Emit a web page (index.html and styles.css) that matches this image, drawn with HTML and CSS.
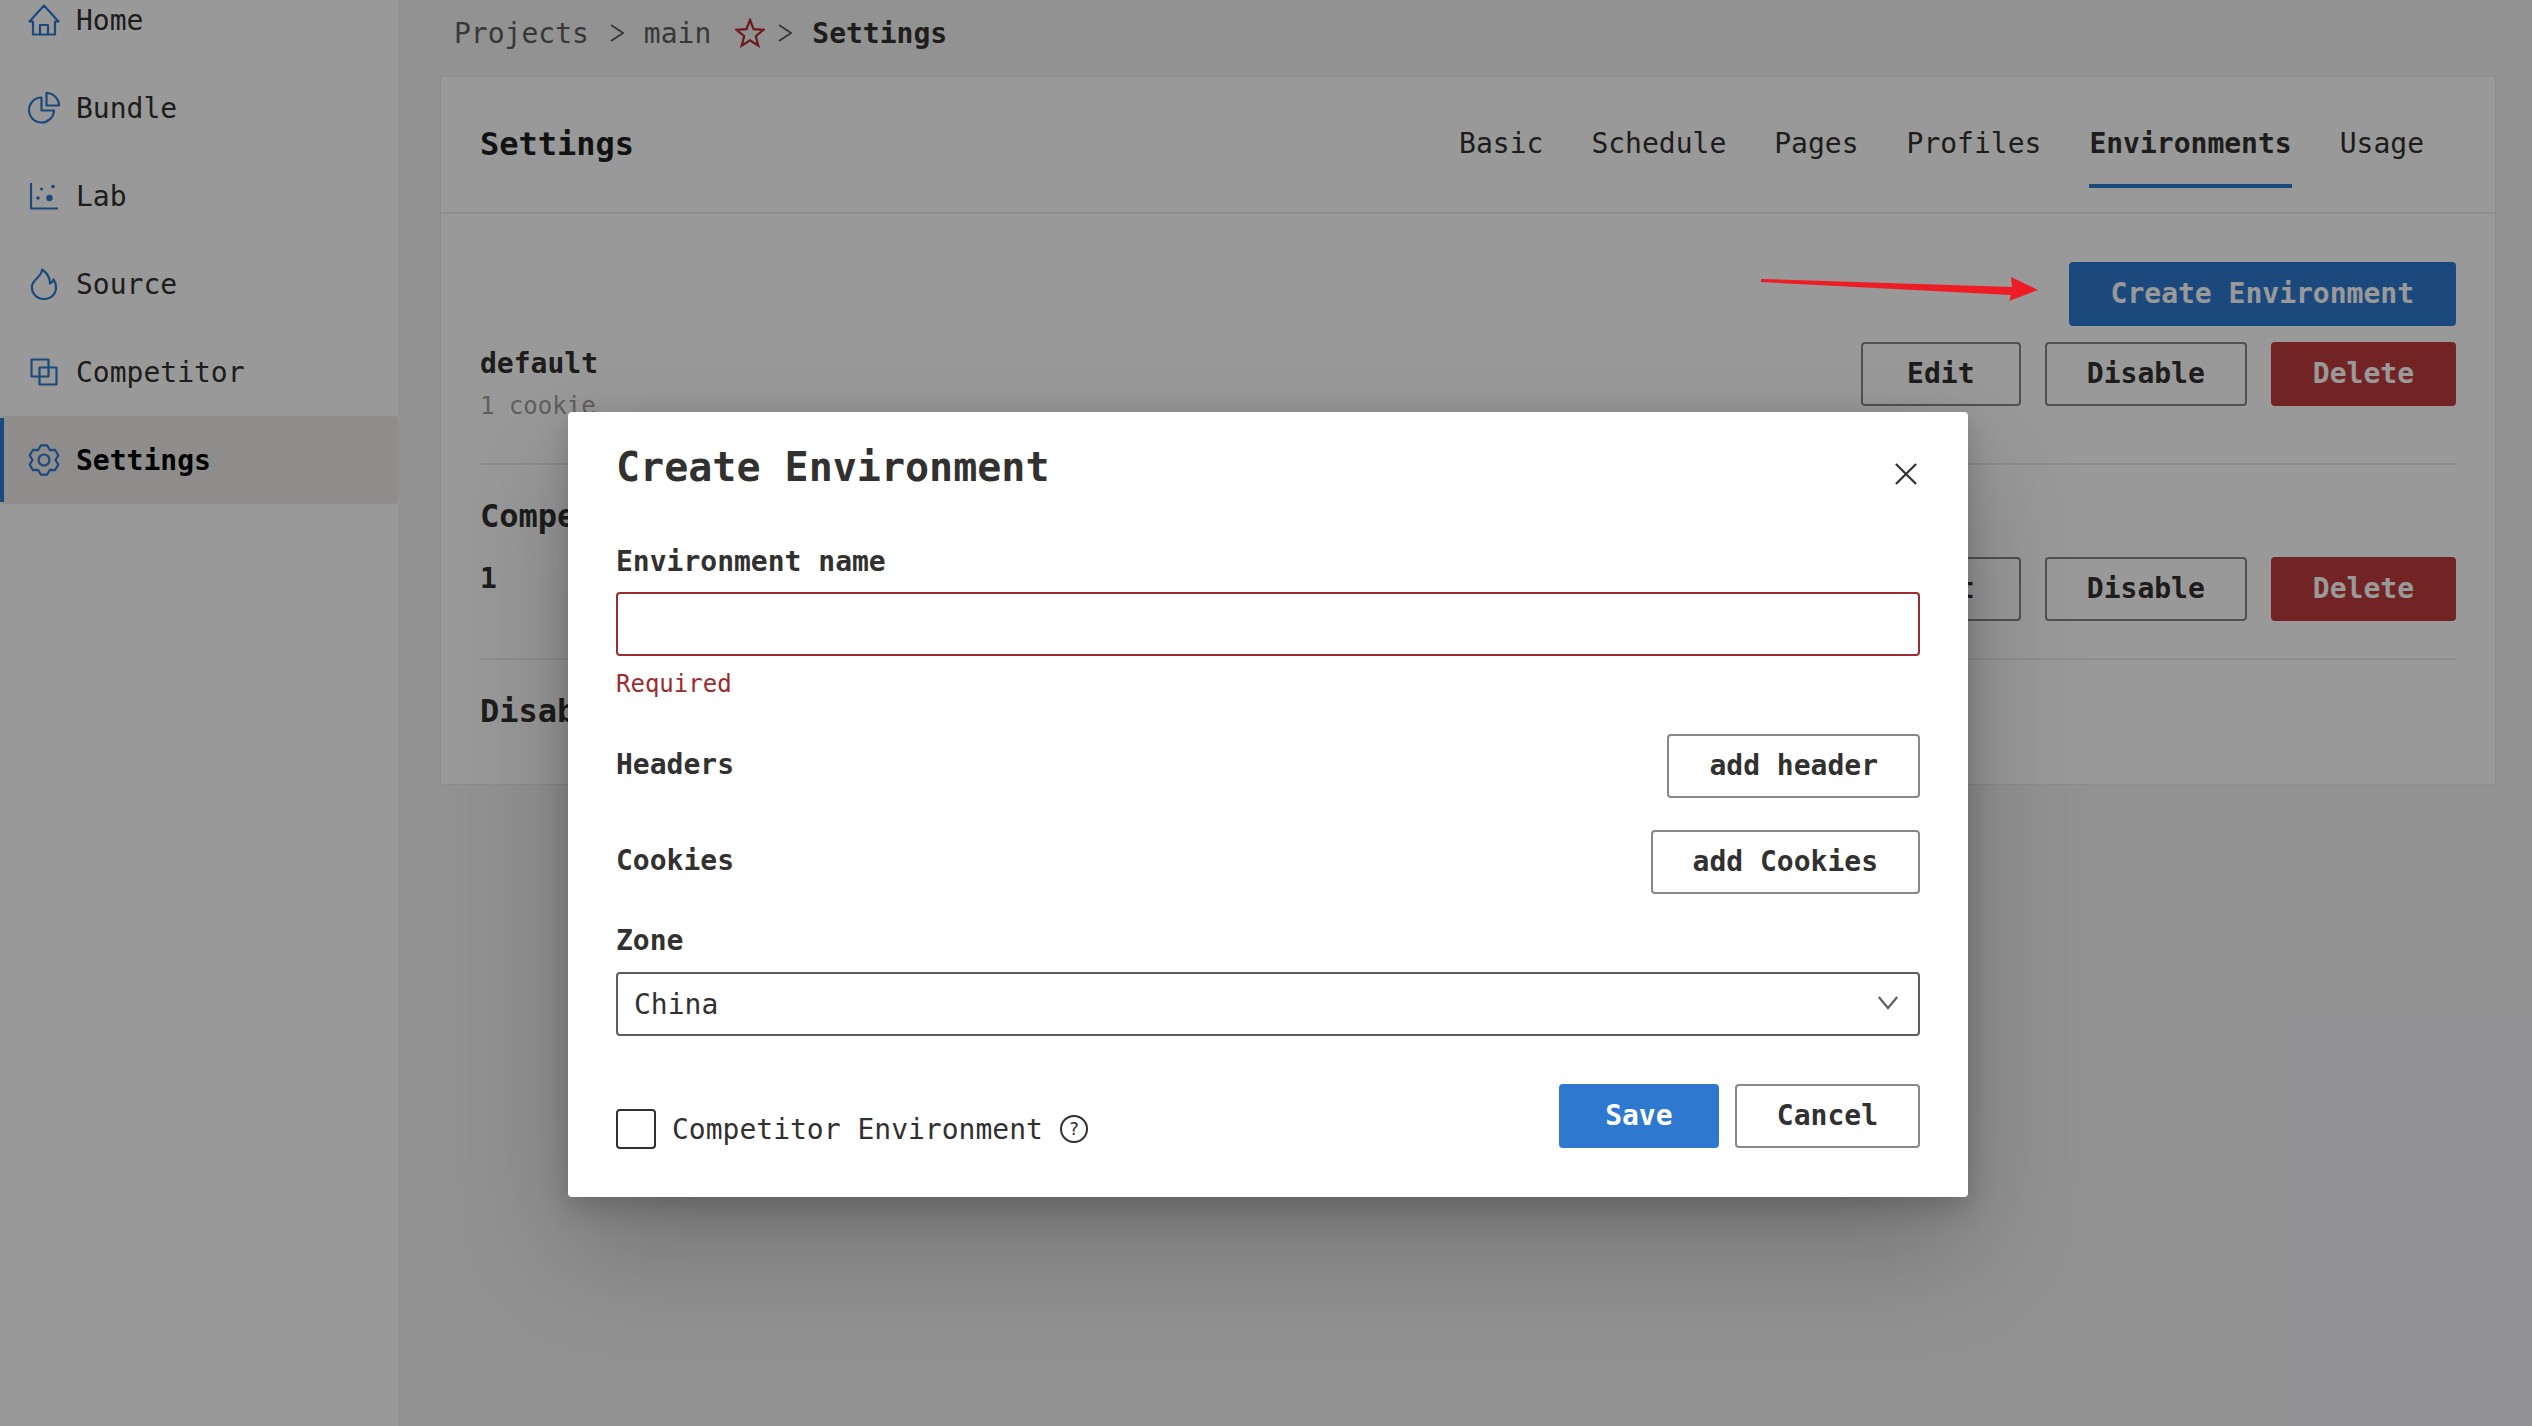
FILE: index.html
```html
<!DOCTYPE html>
<html lang="en">
<head>
<meta charset="utf-8">
<title>Settings</title>
<link rel="stylesheet" href="styles.css">
</head>
<body>
<div class="app">
  <aside class="sidebar">
    <nav class="nav">
      <a class="nav-item"><span class="nav-icon"><svg viewBox="0 0 32 32"><path d="M1.5 17.5 16 1.5l14.5 16H27V30.500H5V17.500ZM12 30.500V21h8v9.500"/></svg></span>Home</a>
      <a class="nav-item"><span class="nav-icon"><svg viewBox="0 0 32 32"><path d="M13.500 5.500A12.500 12.500 0 1 0 26 18.500H13.500ZM18.500 1a12.500 12.500 0 0 1 12.500 12.500H18.500Z"/></svg></span>Bundle</a>
      <a class="nav-item"><span class="nav-icon"><svg viewBox="0 0 32 32"><path d="M3 3V28.500H30"/><circle class="dot" cx="13.500" cy="9" r="1.500"/><circle class="dot" cx="25" cy="6.500" r="1.800"/><circle class="dot" cx="10" cy="18" r="1.800"/><circle class="dot" cx="21.500" cy="18" r="3.200"/></svg></span>Lab</a>
      <a class="nav-item"><span class="nav-icon"><svg viewBox="0 0 32 32"><path d="M14 1.500C14.500 7 7.500 10 4.500 16 2 23.500 8 31 16 31c7 0 12-5 12-11.500 0-3.500-1-6-2.500-8-.7 2-1.700 3.300-3.500 4 0-5.500-3.500-11-8-14Z"/></svg></span>Source</a>
      <a class="nav-item"><span class="nav-icon"><svg viewBox="0 0 32 32"><path d="M3.500 3.500h17v17h-17ZM11.500 11.500h17v17h-17Z"/></svg></span>Competitor</a>
      <a class="nav-item active"><span class="nav-icon"><svg viewBox="0 0 32 32"><path d="M19.100 1.300 21.750 6.040 27.150 5.960 30.270 11.360 27.500 16 30.270 20.640 27.150 26.040 21.750 25.960 19.100 30.700H12.900L10.250 25.960 4.850 26.040 1.730 20.640 4.500 16 1.730 11.360 4.850 5.960 10.250 6.040 12.900 1.300Z"/><circle cx="16" cy="16" r="5.500"/></svg></span>Settings</a>
    </nav>
  </aside>
  <main class="main">
    <div class="breadcrumb">
      <span>Projects</span>
      <svg class="crumb-sep" viewBox="0 0 14 18"><path d="M1 1l12 8-12 8"/></svg>
      <span>main</span>
      <svg class="star" viewBox="0 0 30 30"><path d="M15 2l3.600 9.200 9.900.6-7.700 6.300 2.500 9.600L15 22.400l-8.300 5.300 2.500-9.600-7.700-6.300 9.900-.6Z"/></svg>
      <svg class="crumb-sep tight" viewBox="0 0 14 18"><path d="M1 1l12 8-12 8"/></svg>
      <strong class="crumb-current">Settings</strong>
    </div>
    <section class="card">
      <header class="card-head">
        <h1 class="card-title">Settings</h1>
        <div class="tabs">
          <span class="tab">Basic</span>
          <span class="tab">Schedule</span>
          <span class="tab">Pages</span>
          <span class="tab">Profiles</span>
          <span class="tab selected">Environments</span>
          <span class="tab">Usage</span>
        </div>
      </header>
      <div class="card-body">
        <div class="create-row"><button class="btn primary-dim">Create Environment</button></div>
        <div class="env-row first">
          <div>
            <div class="env-name">default</div>
            <div class="env-meta">1 cookie</div>
          </div>
          <div class="env-actions">
            <button class="btn wide">Edit</button>
            <button class="btn">Disable</button>
            <button class="btn danger">Delete</button>
          </div>
        </div>
        <div class="env-row second">
          <div>
            <h2 class="group-title">Competitor Environments</h2>
            <div class="env-count">1</div>
          </div>
          <div class="env-actions">
            <button class="btn wide">Edit</button>
            <button class="btn">Disable</button>
            <button class="btn danger">Delete</button>
          </div>
        </div>
        <h2 class="group-title disabled-title">Disabled Environments</h2>
      </div>
    </section>
  </main>
</div>

<div class="overlay"></div>

<svg class="annotation" viewBox="0 0 280 26"><path d="M1 3 L1 6 L251 19 L249 25 L278 14 L251 1 L252 11 Z"/></svg>

<div class="modal">
  <div class="modal-head">
    <h2 class="modal-title">Create Environment</h2>
    <svg class="close" viewBox="0 0 24 24"><path d="M1 1l22 22M23 1 1 23"/></svg>
  </div>
  <label class="field-label">Environment name</label>
  <div class="input invalid"></div>
  <div class="error">Required</div>
  <div class="add-row first-add">
    <span class="add-label">Headers</span>
    <button class="btn light">add header</button>
  </div>
  <div class="add-row second-add">
    <span class="add-label">Cookies</span>
    <button class="btn light">add Cookies</button>
  </div>
  <label class="field-label zone">Zone</label>
  <div class="input select">
    <span>China</span>
    <svg class="chevron" viewBox="0 0 24 16"><path d="M2 2l10 12L22 2"/></svg>
  </div>
  <div class="modal-foot">
    <div class="check-wrap">
      <span class="checkbox"></span>
      <span class="check-label">Competitor Environment</span>
      <span class="help">?</span>
    </div>
    <div class="foot-actions">
      <button class="btn save">Save</button>
      <button class="btn light">Cancel</button>
    </div>
  </div>
</div>
</body>
</html>
```

FILE: styles.css
```css
* { box-sizing: border-box; }

html, body {
  margin: 0;
  height: 1426px;
  overflow: hidden;
}

body {
  font-family: "DejaVu Sans Mono", "Liberation Mono", monospace;
  font-size: 28px;
  color: #323130;
  background: #f3f3f6;
  position: relative;
}

.app {
  display: flex;
  height: 1426px;
}

.sidebar {
  width: 398px;
  flex: none;
  background: #fff;
}

.nav {
  display: flex;
  flex-direction: column;
  margin-top: -24px;
}

.nav-item {
  height: 88px;
  display: flex;
  align-items: center;
  gap: 16px;
  padding-left: 28px;
  color: #323130;
  border-radius: 4px;
  position: relative;
}

.nav-item.active {
  background: #edebe9;
  font-weight: 700;
  color: #000;
}

.nav-item.active::before {
  content: "";
  position: absolute;
  left: 0;
  top: 2px;
  bottom: 2px;
  width: 4px;
  background: #2e7bd0;
}

.nav-icon {
  width: 32px;
  height: 32px;
  flex: none;
}

.nav-icon svg {
  display: block;
  width: 32px;
  height: 32px;
  fill: none;
  stroke: #2e7bd0;
  stroke-width: 2.2;
  stroke-linejoin: round;
}

.nav-icon .dot {
  fill: #2e7bd0;
  stroke: none;
}

.main {
  flex: 1;
  min-width: 0;
  padding: 0 36px 0 42px;
}

.breadcrumb {
  height: 76px;
  display: flex;
  align-items: center;
  padding: 0 0 10px 14px;
  color: #605e5c;
}

.crumb-sep {
  width: 14px;
  height: 18px;
  flex: none;
  margin: 0 20px 0 21px;
  fill: none;
  stroke: #605e5c;
  stroke-width: 1.800;
}

.crumb-sep.tight {
  margin: 0 20px 0 13px;
}

.star {
  width: 30px;
  height: 30px;
  margin-left: 24px;
  fill: none;
  stroke: #b32a32;
  stroke-width: 2.200;
}

.crumb-current {
  color: #323130;
}

.card {
  height: 709px;
  background: #fff;
  border: 1px solid #edebe9;
}

.card-head {
  height: 137px;
  display: flex;
  align-items: center;
  justify-content: space-between;
  padding: 0 71px 0 39px;
  border-bottom: 2px solid #edebe9;
}

.card-title {
  margin: 0 0 2px;
  font-size: 32px;
  line-height: 44px;
  font-weight: 700;
  color: #201f1e;
}

.tabs {
  display: flex;
  gap: 48px;
  height: 135px;
  align-items: center;
}

.tab {
  height: 135px;
  padding-top: 47px;
  line-height: 40px;
  position: relative;
}

.tab.selected {
  font-weight: 700;
}

.tab.selected::after {
  content: "";
  position: absolute;
  left: 0;
  right: 0;
  top: 107px;
  height: 4px;
  background: #2e7bd0;
}

.card-body {
  padding: 48px 39px 0;
}

.create-row {
  display: flex;
  justify-content: flex-end;
  height: 80px;
}

.btn {
  height: 64px;
  padding: 0 40px;
  font: 700 28px/1 "DejaVu Sans Mono", "Liberation Mono", monospace;
  color: #323130;
  background: transparent;
  border: 2px solid #8a8886;
  border-radius: 4px;
}

.btn.wide {
  min-width: 160px;
}

.btn.primary-dim {
  background: #2e7bd0;
  border-color: #2e7bd0;
  color: #fff;
}

.btn.danger {
  background: #be3d3d;
  border-color: #be3d3d;
  color: #fff;
}

.env-row {
  display: flex;
  justify-content: space-between;
  align-items: flex-start;
  border-bottom: 2px solid #edebe9;
}

.env-row.first {
  height: 123px;
}

.env-row.second {
  height: 195px;
  padding-top: 92px;
}

.env-actions {
  display: flex;
  gap: 24px;
}

.env-name {
  font-weight: 700;
  line-height: 40px;
  margin-top: 2px;
}

.env-meta {
  font-size: 24px;
  line-height: 32px;
  margin-top: 6px;
  color: #a19f9d;
}

.group-title {
  margin: 0;
  font-size: 32px;
  line-height: 44px;
  font-weight: 700;
  white-space: nowrap;
}

.env-row.second .group-title {
  margin-top: -63px;
}

.env-count {
  font-weight: 700;
  line-height: 40px;
  margin-top: 21px;
}

.disabled-title {
  margin-top: 29px;
}

.env-row.second > div:first-child {
  height: 0;
}

.overlay {
  position: absolute;
  inset: 0;
  background: rgba(0, 0, 0, 0.4);
}

.annotation {
  position: absolute;
  left: 1760px;
  top: 276px;
  width: 280px;
  height: 26px;
  fill: #ee1c25;
}

.modal {
  position: absolute;
  left: 568px;
  top: 412px;
  width: 1400px;
  height: 785px;
  padding: 0 48px;
  background: #fff;
  border-radius: 4px;
  box-shadow: 0 51px 115px rgba(0, 0, 0, 0.22), 0 10px 29px rgba(0, 0, 0, 0.18);
}

.modal-head {
  height: 130px;
  display: flex;
  justify-content: space-between;
  align-items: flex-start;
}

.modal-title {
  margin: 27px 0 0;
  font-size: 40px;
  line-height: 56px;
  font-weight: 700;
}

.close {
  width: 22px;
  height: 22px;
  margin: 51px 3px 0 0;
  fill: none;
  stroke: #323130;
  stroke-width: 2.400;
}

.field-label {
  display: block;
  font-weight: 700;
  line-height: 40px;
}

.input {
  height: 64px;
  margin-top: 10px;
  border: 2px solid #605e5c;
  border-radius: 4px;
}

.input.invalid {
  border-color: #9b2c30;
}

.error {
  margin-top: 12px;
  font-size: 24px;
  line-height: 32px;
  color: #9b2c30;
}

.add-row {
  display: flex;
  align-items: center;
  justify-content: space-between;
  height: 64px;
}

.first-add {
  margin-top: 34px;
}

.second-add {
  margin-top: 32px;
}

.add-label {
  font-weight: 700;
  margin-bottom: 3px;
}

.zone {
  margin-top: 27px;
}

.zone + .input {
  margin-top: 11px;
}

.select {
  display: flex;
  align-items: center;
  justify-content: space-between;
  padding: 0 19px 0 16px;
}

.chevron {
  width: 22px;
  height: 15px;
  margin-bottom: 4px;
  fill: none;
  stroke: #605e5c;
  stroke-width: 2.400;
}

.btn.light {
  background: #fff;
}

.btn.save {
  min-width: 160px;
  background: #2f78cf;
  border-color: #2f78cf;
  color: #fff;
}

.modal-foot {
  display: flex;
  justify-content: space-between;
  align-items: flex-end;
  margin-top: 48px;
}

.check-wrap {
  display: flex;
  align-items: center;
  height: 40px;
  margin-bottom: -1px;
}

.checkbox {
  width: 40px;
  height: 40px;
  flex: none;
  border: 2px solid #323130;
  border-radius: 4px;
}

.check-label {
  margin-left: 16px;
  margin-top: 1px;
}

.help {
  width: 28px;
  height: 28px;
  margin-left: 17px;
  border: 2px solid #323130;
  border-radius: 50%;
  font-size: 18px;
  line-height: 24px;
  text-align: center;
}

.foot-actions {
  display: flex;
  gap: 16px;
}
```
